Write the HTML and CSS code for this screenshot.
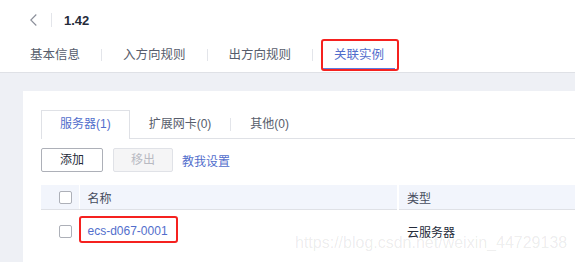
FILE: index.html
```html
<!DOCTYPE html>
<html lang="zh-CN">
<head>
<meta charset="utf-8">
<title>1.42 - 关联实例</title>
<link rel="stylesheet" href="styles.css">
</head>
<body>
<div class="page">
  <header class="header">
    <div class="topbar">
      <span class="back">
        <svg width="7" height="12" viewBox="0 0 7 12"><polyline points="6.3,0.5 0.8,6 6.3,11.5" fill="none" stroke="#8a8e99" stroke-width="1.1"/></svg>
      </span>
      <span class="vsep"></span>
      <span class="title">1.42</span>
    </div>
    <nav class="tabs">
      <span class="tab">基本信息</span>
      <span class="tab-sep"></span>
      <span class="tab">入方向规则</span>
      <span class="tab-sep"></span>
      <span class="tab">出方向规则</span>
      <span class="tab-sep"></span>
      <span class="tab active">关联实例</span>
    </nav>
  </header>
  <main class="content">
    <section class="card">
      <div class="subtabs">
        <span class="subtab active">服务器(1)</span>
        <span class="subtab">扩展网卡(0)</span>
        <span class="subtab-sep"></span>
        <span class="subtab">其他(0)</span>
      </div>
      <div class="toolbar">
        <button class="btn btn-add">添加</button>
        <button class="btn btn-disabled">移出</button>
        <span class="link">教我设置</span>
      </div>
      <table class="table">
        <colgroup>
          <col class="col-check">
          <col class="col-name">
          <col>
        </colgroup>
        <thead>
          <tr>
            <th class="cell-check"><span class="checkbox"></span></th>
            <th class="cell">名称</th>
            <th class="cell cell-type">类型</th>
          </tr>
        </thead>
        <tbody>
          <tr>
            <td class="cell-check"><span class="checkbox"></span></td>
            <td class="cell"><span class="name-link">ecs-d067-0001</span></td>
            <td class="cell cell-type">云服务器</td>
          </tr>
        </tbody>
      </table>
    </section>
  </main>
  <div class="watermark">https://blog.csdn.net/weixin_44729138</div>
</div>
</body>
</html>
```

FILE: styles.css
```css
html, body {
  margin: 0;
  padding: 0;
  overflow: hidden;
  background: #eef0f5;
}

body {
  font-family: "Liberation Sans", "Noto Sans CJK SC", sans-serif;
  font-size: 12px;
  color: #252b3a;
}

.page {
  position: relative;
  width: 575px;
  height: 262px;
  overflow: hidden;
}

/* ---------- header ---------- */
.header {
  background: #fff;
  padding-bottom: 2px;
  border-bottom: 1px solid #dfe1e6;
}

.topbar {
  height: 40px;
  display: flex;
  align-items: center;
  padding-left: 30px;
}

.back {
  display: flex;
  width: 7px;
  height: 12px;
  margin-right: 14px;
}

.vsep {
  width: 1px;
  height: 14px;
  background: #e3e5ea;
  margin-right: 12px;
}

.title {
  font-size: 13px;
  font-weight: bold;
  color: #252b3a;
}

.tabs {
  height: 30px;
  display: flex;
  align-items: center;
  padding-left: 19px;
}

.tab {
  position: relative;
  box-sizing: border-box;
  height: 30px;
  padding: 2px 11px 0;
  line-height: 26px;
  font-size: 12.5px;
  color: #575d6c;
  border-bottom: 2px solid transparent;
}

.tab.active {
  color: #526ecc;
  border-bottom-color: #5e7ce0;
}

.tab.active::after {
  content: "";
  position: absolute;
  top: -1px;
  left: -2px;
  right: -4px;
  bottom: -3px;
  border: 2.5px solid #f5211f;
  border-radius: 3px;
}

.tab-sep {
  width: 1px;
  height: 12px;
  background: #e3e5ea;
  margin: 0 10px;
}

/* ---------- content ---------- */
.content {
  padding: 18px 0 0 23px;
}

.card {
  background: #fff;
  padding: 19px 0 0 18px;
  height: 200px;
}

.subtabs {
  display: flex;
  align-items: flex-start;
  box-sizing: border-box;
  height: 29px;
  border-bottom: 1px solid #dfe1e6;
}

.subtab {
  padding: 0 19px;
  line-height: 28px;
  color: #575d6c;
}

.subtab.active {
  box-sizing: border-box;
  height: 29px;
  padding: 0 18px;
  line-height: 27px;
  border: 1px solid #dfe1e6;
  border-bottom: none;
  background: #fff;
  color: #526ecc;
}

.subtab-sep {
  align-self: center;
  width: 1px;
  height: 13px;
  background: #e3e5ea;
}

.toolbar {
  display: flex;
  align-items: center;
  margin-top: 9px;
}

.btn {
  box-sizing: border-box;
  height: 24px;
  padding: 0;
  border-radius: 2px;
  font-family: inherit;
  font-size: 12px;
  line-height: 22px;
}

.btn-add {
  width: 62px;
  background: #fff;
  border: 1px solid #adb0b8;
  color: #252b3a;
  margin-right: 10px;
}

.btn-disabled {
  width: 60px;
  background: #f5f5f6;
  border: 1px solid #e0e2e7;
  color: #b8bac2;
  margin-right: 9px;
}

.link {
  color: #526ecc;
}

/* ---------- table ---------- */
.table {
  margin-top: 13px;
  width: 100%;
  table-layout: fixed;
  border-collapse: collapse;
}

.col-check { width: 38px; }
.col-name { width: 319px; }

.table th {
  height: 24px;
  padding: 0;
  background: #f2f5fc;
  border-bottom: 1px solid #dfe1e6;
  font-weight: normal;
  text-align: left;
  color: #464c5c;
}

.table td {
  height: 42px;
  padding: 0;
  vertical-align: middle;
}

.cell-check {
  padding-left: 18px !important;
  line-height: 0;
}

.cell {
  border-left: 1px solid #fff;
  padding-left: 8px !important;
}

.cell-type {
  border-left-width: 2px;
}

.checkbox {
  display: inline-block;
  box-sizing: border-box;
  width: 13px;
  height: 13px;
  border: 1px solid #adb0b8;
  border-radius: 2px;
  background: #fff;
  vertical-align: middle;
}

.name-link {
  position: relative;
  display: inline-block;
  line-height: 16px;
  color: #526ecc;
}

.name-link::after {
  content: "";
  position: absolute;
  top: -7px;
  bottom: -4px;
  left: -9px;
  right: -10px;
  border: 2.5px solid #f5211f;
  border-radius: 3px;
}

/* ---------- watermark overlay ---------- */
.watermark {
  position: absolute;
  left: 295px;
  top: 234px;
  font-family: "Liberation Sans", sans-serif;
  font-size: 16px;
  line-height: 18px;
  color: rgba(0, 0, 0, 0.085);
  white-space: nowrap;
}
```
